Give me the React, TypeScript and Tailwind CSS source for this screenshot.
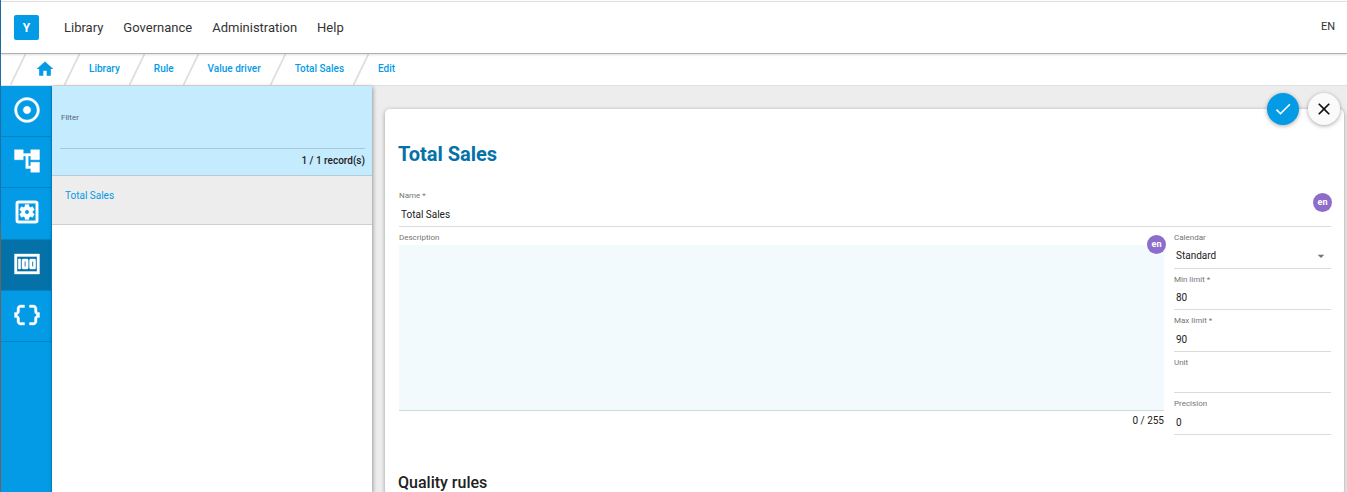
import { useState } from "react";
import type { ReactNode } from "react";
import {
  MdAccountTree,
  MdAdjust,
  MdArrowDropDown,
  MdCheck,
  MdClose,
  MdDataObject,
  MdHome,
  MdMoney,
  MdOutlineSettingsApplications,
} from "react-icons/md";

const menu = ["Library", "Governance", "Administration", "Help"];
const crumbs = ["Library", "Rule", "Value driver", "Total Sales", "Edit"];
const tools = [
  { label: "Targets", Icon: MdAdjust },
  { label: "Hierarchy", Icon: MdAccountTree },
  { label: "Settings", Icon: MdOutlineSettingsApplications },
  { label: "Value drivers", Icon: MdMoney, active: true },
  { label: "Objects", Icon: MdDataObject },
];

function Slash() {
  return (
    <svg className="h-full w-4 shrink-0" viewBox="0 0 16 32" preserveAspectRatio="none" aria-hidden="true">
      <path d="M0.5 32 15.5 0" stroke="#dedede" strokeWidth="1.8" fill="none" />
    </svg>
  );
}

function Crumb({ children }: { children: ReactNode }) {
  return (
    <li className="flex items-center">
      <Slash />
      <a href="#" className="px-[9px] pb-0.5">
        {children}
      </a>
    </li>
  );
}

function LangBadge({ className }: { className: string }) {
  return (
    <span
      className={`absolute flex h-[19px] w-[19px] items-center justify-center rounded-full bg-[#8e6cc9] text-[9px] font-bold text-white ${className}`}
    >
      en
    </span>
  );
}

function Field({ id, label, value = "" }: { id: string; label: string; value?: string }) {
  const [text, setText] = useState(value);
  return (
    <div className="flex h-full flex-col border-b border-[#dcdcdc] pt-1.5">
      <label htmlFor={id} className="text-[8px] leading-[10px] text-[#757575]">
        {label}
      </label>
      <input
        id={id}
        value={text}
        onChange={(e) => setText(e.target.value)}
        className="min-h-0 w-full flex-1 bg-transparent px-0.5 pt-0.5 text-[10px] text-[#212121] outline-none"
      />
    </div>
  );
}

export default function App() {
  const [filter, setFilter] = useState("");
  const [description, setDescription] = useState("");

  return (
    <div className="flex h-screen overflow-hidden bg-white font-['Roboto',sans-serif] text-[#212121]">
      <div className="w-px shrink-0 bg-linear-to-b from-[#1f6fa8] from-45% to-[#6d625c] to-48%" />
      <div className="flex min-w-0 flex-1 flex-col">
        <header className="z-10 mt-px flex h-[53px] shrink-0 items-center justify-between border-t border-b border-t-[#dedede] border-b-[#b0b0b0] bg-white pr-3 pl-[13px] shadow-[0_1px_2px_rgba(0,0,0,0.12)]">
          <div className="flex items-center gap-[25px]">
            <a
              href="#"
              className="flex h-[25px] w-[25px] items-center justify-center rounded-xs bg-[#039be5] text-[12px] font-bold text-white"
            >
              Y
            </a>
            <nav className="flex gap-5 text-[13px] text-[#333333]">
              {menu.map((item) => (
                <a key={item} href="#">
                  {item}
                </a>
              ))}
            </nav>
          </div>
          <button type="button" className="text-[11px] text-[#333333]">
            EN
          </button>
        </header>

        <nav aria-label="Breadcrumb" className="h-8 shrink-0 border-b border-[#e0e0e0] pl-[9px]">
          <ol className="flex h-full text-[10px] font-medium text-[#039be5]">
            <Crumb>
              <MdHome size={20} title="Home" />
            </Crumb>
            {crumbs.map((item) => (
              <Crumb key={item}>{item}</Crumb>
            ))}
          </ol>
        </nav>

        <div className="flex min-h-0 flex-1">
          <nav aria-label="Tools" className="w-[51px] shrink-0 border-r border-[#0288d1] bg-[#039be5]">
            <div className="grid h-64 grid-rows-5">
              {tools.map(({ label, Icon, active }) => (
                <button
                  key={label}
                  type="button"
                  aria-label={label}
                  className={`flex items-center justify-center border-b border-[#0385c4] pb-0.5 pl-px text-white ${active ? "bg-[#0471a8]" : ""}`}
                >
                  <Icon size={30} className="stroke-[0.3px] [&>path[fill=none]]:stroke-none" />
                </button>
              ))}
            </div>
          </nav>

          <aside className="z-10 w-80 shrink-0 bg-white shadow-[1px_1px_4px_rgba(0,0,0,0.35)]">
            <div className="border-b border-[#b5cbd6] bg-[#c5ebfe] pt-[27px] pr-[7px] pl-2">
              <label htmlFor="filter" className="block pl-px text-[8px] leading-[10px] text-[#55666f]">
                Filter
              </label>
              <input
                id="filter"
                value={filter}
                onChange={(e) => setFilter(e.target.value)}
                className="block h-[26px] w-full border-b border-[#a9c8d8] bg-transparent text-[10px] outline-none"
              />
              <p className="h-[26px] text-right text-[10px] leading-6 font-medium">1 / 1 record(s)</p>
            </div>
            <a
              href="#"
              className="flex h-[49px] items-center border-b border-[#d0d0d0] bg-[#ededed] px-[13px] pb-2.5 text-[10px] text-[#039be5]"
            >
              Total Sales
            </a>
          </aside>

          <main className="min-w-0 flex-1 bg-[#ededed] pt-[23px] pr-[3px] pl-[13px]">
            <form
              onSubmit={(e) => e.preventDefault()}
              className="relative min-h-full rounded-[5px] bg-white px-[13px] pt-[25px] shadow-[0_1px_4px_rgba(0,0,0,0.35)]"
            >
              <div className="absolute -top-4 right-1 flex gap-[9px]">
                <button
                  type="submit"
                  aria-label="Save"
                  className="flex h-8 w-8 items-center justify-center rounded-full bg-[#039be5] text-white shadow-[0_1px_4px_rgba(0,0,0,0.35)]"
                >
                  <MdCheck size={20} />
                </button>
                <button
                  type="button"
                  aria-label="Close"
                  className="flex h-8 w-8 items-center justify-center rounded-full bg-[#fafafa] text-[#111111] shadow-[0_1px_4px_rgba(0,0,0,0.35)]"
                >
                  <MdClose size={20} />
                </button>
              </div>

              <h1 className="text-[20px] leading-10 font-bold text-[#0471a8]">Total Sales</h1>

              <div className="mt-[11px] pl-px">
                <div className="relative h-[42px]">
                  <Field id="name" label="Name *" value="Total Sales" />
                  <LangBadge className="top-2 -right-px" />
                </div>

                <div className="flex gap-2.5">
                  <div className="relative min-w-0 flex-1 pt-1.5">
                    <label htmlFor="description" className="block text-[8px] leading-[10px] text-[#757575]">
                      Description
                    </label>
                    <textarea
                      id="description"
                      maxLength={255}
                      value={description}
                      onChange={(e) => setDescription(e.target.value)}
                      className="mt-0.5 block h-[166px] w-full resize-none border-b border-[#d0d8dc] bg-[#f2fafe] p-1 text-[10px] outline-none"
                    />
                    <p className="text-right text-[10px] leading-5">{description.length} / 255</p>
                    <LangBadge className="top-2 -right-0.5" />
                  </div>

                  <div className="grid h-52 w-[157px] shrink-0 grid-rows-5">
                    <div className="relative flex flex-col border-b border-[#dcdcdc] pt-1.5">
                      <label htmlFor="calendar" className="text-[8px] leading-[10px] text-[#757575]">
                        Calendar
                      </label>
                      <select
                        id="calendar"
                        className="min-h-0 w-full flex-1 appearance-none bg-transparent px-0.5 text-[10px] outline-none"
                      >
                        <option>Standard</option>
                      </select>
                      <MdArrowDropDown
                        size={16}
                        className="pointer-events-none absolute right-0.5 bottom-1 text-[#757575]"
                      />
                    </div>
                    <Field id="min" label="Min limit *" value="80" />
                    <Field id="max" label="Max limit *" value="90" />
                    <Field id="unit" label="Unit" />
                    <Field id="precision" label="Precision" value="0" />
                  </div>
                </div>
              </div>

              <h2 className="mt-9 text-[16px] leading-6 font-medium">Quality rules</h2>
            </form>
          </main>
        </div>
      </div>
    </div>
  );
}
